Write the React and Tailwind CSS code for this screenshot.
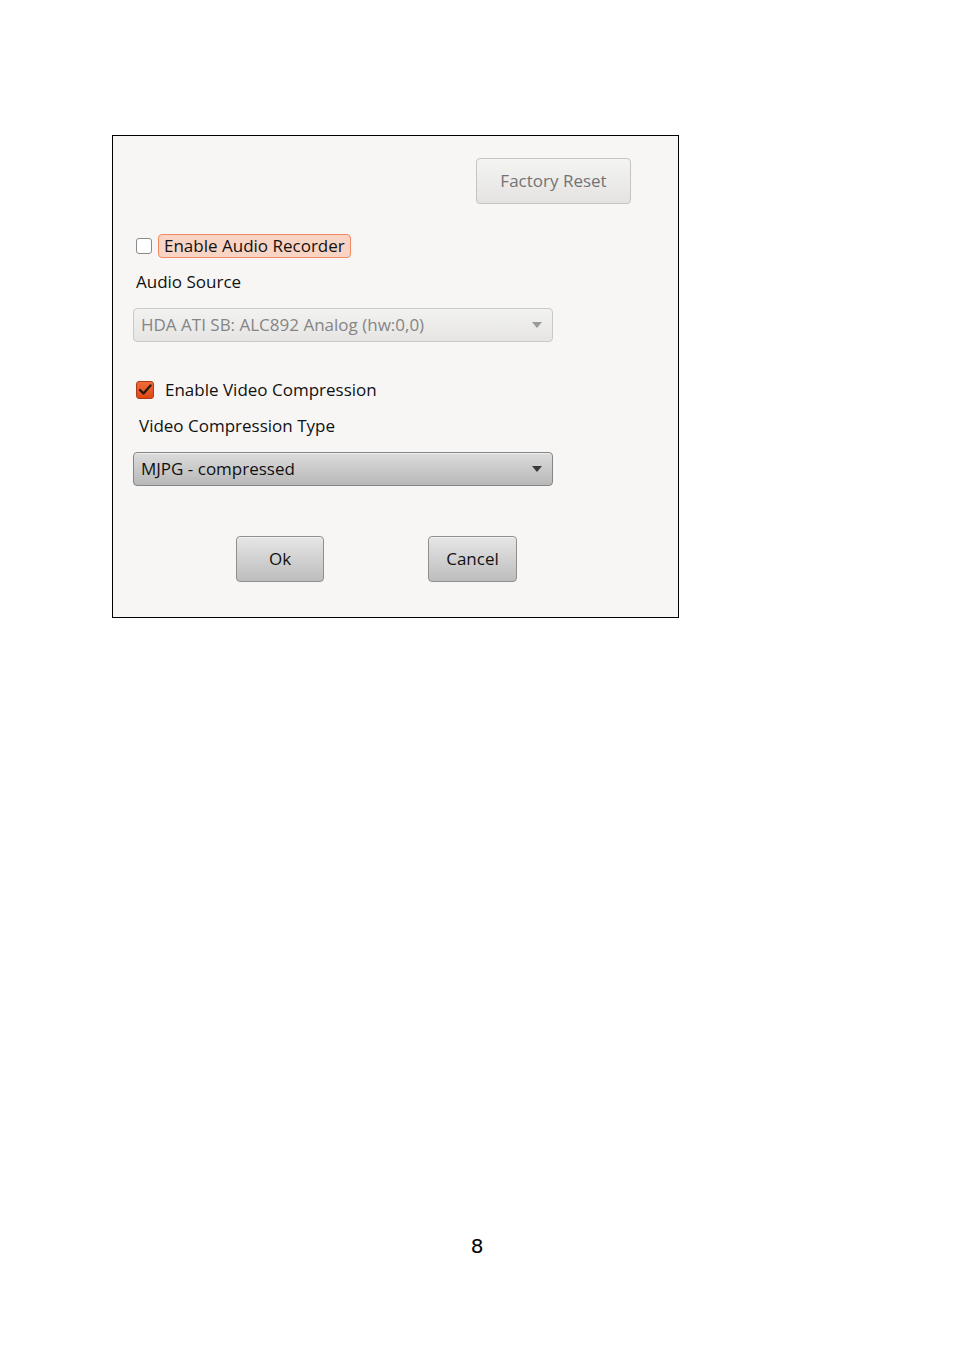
import React from "react";

const font = { fontFamily: "'Open Sans', 'DejaVu Sans', sans-serif" };

const Arrow = ({ className }) => (
  <svg width="10" height="7" viewBox="0 0 10 7" className={className}>
    <path d="M0 0 H10 L5 6 Z" fill="currentColor" />
  </svg>
);

const GtkButton = ({ children, className = "" }) => (
  <button
    className={`flex items-center justify-center rounded-[4px] border border-[#8f8f8f] bg-gradient-to-b from-[#e6e6e6] to-[#bdbdbd] shadow-[inset_0_1px_0_#f4f4f4] text-[17px] text-[#111111] ${className}`}
  >
    {children}
  </button>
);

export default function App() {
  return (
    <div className="w-[954px] h-[1350px] bg-white relative" style={font}>
      <div className="pt-[135px] pl-[112px]">
        {/* Dialog */}
        <div className="w-[567px] h-[483px] border border-black bg-[#f7f6f5] flex flex-col">
          <div className="flex justify-end pt-[22px] pr-[47px]">
            <button className="w-[155px] h-[46px] rounded-[4px] border border-[#c4c4c4] bg-gradient-to-b from-[#f4f4f3] to-[#e4e3e2] text-[17px] text-[#737373]">
              Factory Reset
            </button>
          </div>

          {/* Audio recorder */}
          <div className="flex items-center mt-[30px] pl-[23px]">
            <span className="w-[16px] h-[16px] rounded-[3px] border border-[#8a8a8a] bg-white" />
            <span className="ml-[6px] h-[24px] px-[5px] flex items-center rounded-[4px] border border-[#f08a62] bg-[#f9d3c3] text-[17px] text-[#111111]">
              Enable Audio Recorder
            </span>
          </div>
          <div className="mt-[12px] pl-[23px] text-[17px] text-[#111111] leading-[24px]">
            Audio Source
          </div>
          <div className="mt-[14px] ml-[20px] w-[420px] h-[34px] rounded-[4px] border border-[#c9c9c9] bg-gradient-to-b from-[#f2f2f1] to-[#e6e5e4] flex items-center justify-between pl-[7px] pr-[10px] text-[17px] text-[#858585]">
            <span>HDA ATI SB: ALC892 Analog (hw:0,0)</span>
            <Arrow className="text-[#9a9a9a]" />
          </div>

          {/* Video compression */}
          <div className="flex items-center mt-[36px] pl-[23px]">
            <span className="w-[18px] h-[18px] rounded-[3px] border border-[#b03a12] bg-gradient-to-b from-[#f26b3a] to-[#dd4814] flex items-center justify-center">
              <svg width="14" height="12" viewBox="0 0 14 12">
                <path d="M2 6 L5.5 9.5 L12.5 1.5" fill="none" stroke="#2b1a12" strokeWidth="2.4" strokeLinecap="round" strokeLinejoin="round" />
              </svg>
            </span>
            <span className="ml-[11px] text-[17px] text-[#111111] leading-[24px]">
              Enable Video Compression
            </span>
          </div>
          <div className="mt-[12px] pl-[26px] text-[17px] text-[#111111] leading-[24px]">
            Video Compression Type
          </div>
          <div className="mt-[14px] ml-[20px] w-[420px] h-[34px] rounded-[4px] border border-[#858585] bg-gradient-to-b from-[#dcdcdc] to-[#b8b8b8] shadow-[inset_0_1px_0_#eeeeee] flex items-center justify-between pl-[7px] pr-[10px] text-[17px] text-[#111111]">
            <span>MJPG - compressed</span>
            <Arrow className="text-[#3a3a3a]" />
          </div>

          {/* Buttons */}
          <div className="flex mt-[50px] pl-[123px] gap-[104px]">
            <GtkButton className="w-[88px] h-[46px]">Ok</GtkButton>
            <GtkButton className="w-[89px] h-[46px]">Cancel</GtkButton>
          </div>
        </div>
      </div>

      <div className="mt-[613px] text-center text-[20px] text-black" style={{ fontFamily: "'DejaVu Sans', sans-serif" }}>
        8
      </div>
    </div>
  );
}
